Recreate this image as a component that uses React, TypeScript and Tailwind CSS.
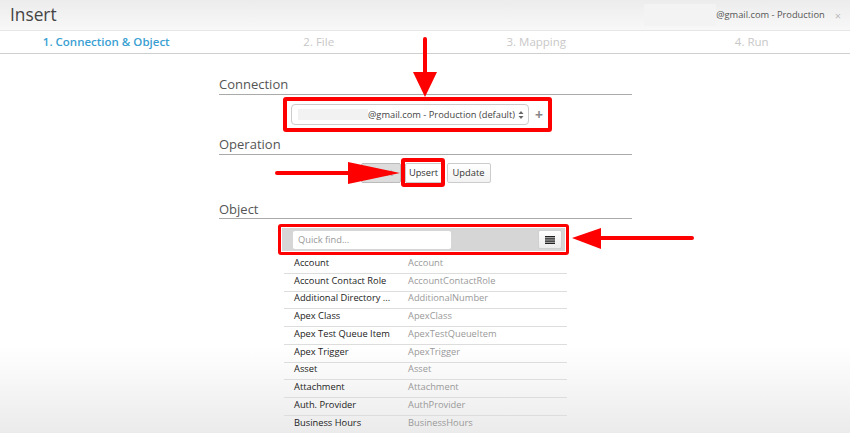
import React from "react";

const rows: [string, string][] = [
  ["Account", "Account"],
  ["Account Contact Role", "AccountContactRole"],
  ["Additional Directory ...", "AdditionalNumber"],
  ["Apex Class", "ApexClass"],
  ["Apex Test Queue Item", "ApexTestQueueItem"],
  ["Apex Trigger", "ApexTrigger"],
  ["Asset", "Asset"],
  ["Attachment", "Attachment"],
  ["Auth. Provider", "AuthProvider"],
  ["Business Hours", "BusinessHours"],
];

export default function App() {
  return (
    <div
      className="relative w-[850px] h-[433px] overflow-hidden bg-gradient-to-b from-white from-80% to-[#ebebeb] text-[#333]"
      style={{ fontFamily: '"Open Sans", "Liberation Sans", sans-serif' }}
    >
      {/* Header */}
      <div className="h-[31px] flex items-center bg-gradient-to-b from-[#ececec] to-[#f8f8f8] border-b border-[#e6e6e6] pl-[10px] pr-[9px]">
        <div className="text-[17.3px] text-[#444] leading-none">Insert</div>
        <div className="flex-1" />
        <div className="w-[72px] h-[22px] bg-[#f3f3f3]" />
        <div className="text-[9.3px] text-[#555]">@gmail.com - Production</div>
        <div className="ml-[10px] text-[11px] text-[#bbb] leading-none">×</div>
      </div>
      {/* Steps */}
      <div className="h-[23px] grid grid-cols-4 items-center border-b border-[#cfcfcf] bg-white text-[11.5px]">
        <div className="text-center font-semibold text-[#3a9fd2]">1. Connection &amp; Object</div>
        <div className="text-center text-[#c8c8c8]">2. File</div>
        <div className="text-center text-[#c8c8c8] pl-[10px]">3. Mapping</div>
        <div className="text-center text-[#c8c8c8] pl-[16px]">4. Run</div>
      </div>

      {/* Content */}
      <div className="w-[413px] ml-[219px] flex flex-col">
        <div className="mt-[22px] h-[19px] border-b border-[#aaa] text-[13px] leading-[17px] text-[#555]">Connection</div>

        <div className="mt-[2px] ml-[64px] w-[269px] h-[35px] border-[4px] border-[#f00] rounded-[3px] flex items-center pl-[4px]">
          <div className="w-[238px] h-[21px] border border-[#ccc] rounded-[4px] bg-white flex items-center pl-[6px] pr-[4px] text-[9.3px] text-[#444]">
            <div className="w-[70px] h-[11px] bg-[#f2f2f2]" />
            <div className="flex-1 whitespace-nowrap overflow-hidden">@gmail.com - Production (default)</div>
            <svg width="6" height="10" viewBox="0 0 6 10" className="ml-[3px] shrink-0">
              <path d="M3 1 L5.5 4 H0.5 Z" fill="#666" />
              <path d="M3 9 L5.5 6 H0.5 Z" fill="#666" />
            </svg>
          </div>
          <div className="ml-[6px] text-[14px] font-bold text-[#888] leading-none">+</div>
        </div>

        <div className="mt-[3px] h-[20px] border-b border-[#aaa] text-[13px] leading-[19px] text-[#555]">Operation</div>

        <div className="mt-[8px] flex justify-center gap-[4px] text-[9.3px] text-[#333]">
          <div className="w-[40px] h-[20px] rounded-[2px] border border-[#bbb] bg-[#dcdcdc] flex items-center justify-center text-[#999]">Insert</div>
          <div className="relative w-[38px] h-[20px] rounded-[2px] border border-[#ccc] bg-white flex items-center justify-center">
            Upsert
            <div className="absolute -left-[5px] -right-[3px] -top-[6px] -bottom-[5px] border-[4px] border-[#f00] rounded-[3px]" />
          </div>
          <div className="w-[44px] h-[20px] rounded-[2px] border border-[#ccc] bg-gradient-to-b from-white to-[#f2f2f2] flex items-center justify-center">Update</div>
        </div>

        <div className="mt-[17px] h-[19px] border-b border-[#aaa] text-[13px] leading-[19px] text-[#555]">Object</div>

        <div className="mt-[5px] ml-[59px] w-[291px] border-[3px] border-[#f00] rounded-[3px] p-[1px]">
          <div className="h-[23px] bg-[#d6d6d6] flex items-center pl-[11px] pr-[3px]">
            <div className="w-[158px] h-[18px] bg-white rounded-[2px] flex items-center pl-[5px] text-[9.3px] text-[#999]">Quick find...</div>
            <div className="flex-1" />
            <div className="w-[24px] h-[19px] rounded-[2px] bg-gradient-to-b from-white to-[#ececec] border border-[#d0d0d0] flex items-center justify-center">
              <svg width="10" height="8" viewBox="0 0 10 8">
                <rect x="0" y="0" width="10" height="1.4" fill="#222" />
                <rect x="0" y="2.2" width="10" height="1.4" fill="#222" />
                <rect x="0" y="4.4" width="10" height="1.4" fill="#222" />
                <rect x="0" y="6.6" width="10" height="1.4" fill="#222" />
              </svg>
            </div>
          </div>
        </div>

        <div className="mt-[1px] ml-[65px] w-[283px] flex flex-col">
          {rows.map(([a, b]) => (
            <div key={a} className="h-[17.75px] flex items-center pb-[3px] border-b border-[#ddd] text-[9.3px]">
              <div className="w-[124px] pl-[10px] text-[#222] whitespace-nowrap">{a}</div>
              <div className="text-[#999]">{b}</div>
            </div>
          ))}
        </div>
      </div>

      {/* Annotation arrows */}
      <svg className="absolute left-0 top-0 pointer-events-none" width="850" height="433">
        <line x1="425" y1="39" x2="425" y2="76" stroke="#f00" strokeWidth="4" strokeLinecap="round" />
        <polygon points="413,72 437,72 425,97" fill="#f00" />
        <line x1="277" y1="173" x2="352" y2="173" stroke="#f00" strokeWidth="4" strokeLinecap="round" />
        <polygon points="348,162 348,184 400,173" fill="#f00" />
        <line x1="692" y1="238" x2="598" y2="238" stroke="#f00" strokeWidth="4" strokeLinecap="round" />
        <polygon points="601,228 601,249 572,238" fill="#f00" />
      </svg>
    </div>
  );
}
